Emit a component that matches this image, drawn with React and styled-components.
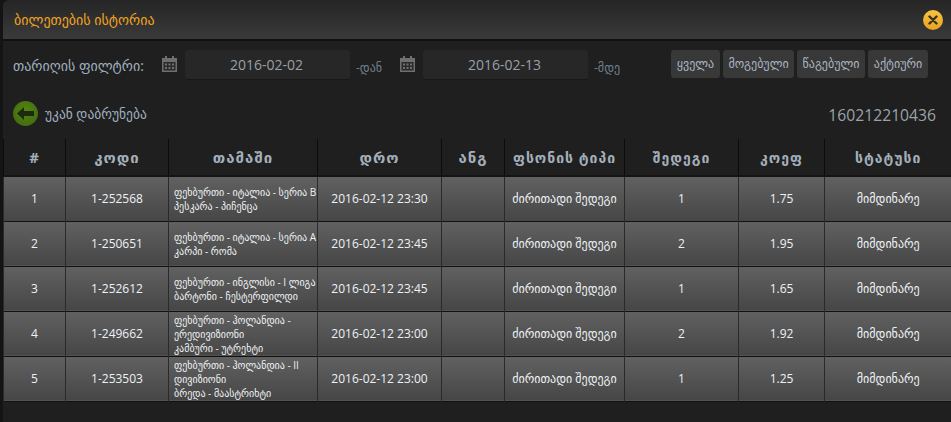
import React from 'react'
import styled, { createGlobalStyle } from 'styled-components'

const Global = createGlobalStyle`
  html, body {
    margin: 0;
    height: 422px;
    overflow: hidden;
    background: #141414;
  }
  * { box-sizing: border-box; }
`
const Modal = styled.div`
  width: 948px;
  height: 422px;
  margin-left: 3px;
  background: #1f1f1f;
  border-top-left-radius: 6px;
  overflow: hidden;
  font-family: "Open Sans", "DejaVu Sans", sans-serif;
`
const Head = styled.div`
  height: 41px;
  padding: 0 8px 0 11px;
  display: flex;
  align-items: center;
  justify-content: space-between;
  background: linear-gradient(#252525, #3a3a3a);
  border-bottom: 2px solid #111;
`
const Title = styled.div`
  font-size: 14px;
  color: #f2a31f;
`
const Close = styled.div`
  width: 20px;
  height: 20px;
  border-radius: 50%;
  background: linear-gradient(#f6c344, #e9a221);
  display: flex;
  align-items: center;
  justify-content: center;
`
const Filters = styled.div`
  height: 39px;
  margin-top: 9px;
  padding-left: 10px;
  display: flex;
  align-items: flex-start;
`
const FilterLabel = styled.div`
  width: 149px;
  padding-top: 6px;
  font-size: 14px;
  color: #9fb0bf;
`
const DateBox = styled.div`
  width: 165px;
  height: 30px;
  margin-left: 8px;
  padding-right: 2px;
  background: #272727;
  border-bottom: 1px solid #171717;
  border-radius: 3px;
  color: #98a0a8;
  font-size: 14px;
  line-height: 30px;
  text-align: center;
`
const Suffix = styled.div`
  width: ${p => p.$width}px;
  padding: 9px 0 0 6px;
  font-size: 12px;
  color: #6f7f8d;
`
const Cal = styled.svg`
  width: 15px;
  height: 16px;
  margin-top: 6px;
`
const Buttons = styled.div`
  margin-left: 39px;
  display: flex;
  gap: 3px;
`
const Btn = styled.div`
  width: ${p => p.$width}px;
  height: 28px;
  background: #383838;
  border-radius: 3px;
  font-size: 12px;
  line-height: 27px;
  text-align: center;
  color: #a9b6c2;
`
const BackRow = styled.div`
  height: 50px;
  padding: 12px 15px 0 10px;
  display: flex;
  align-items: flex-start;
  justify-content: space-between;
`
const Back = styled.div`
  display: flex;
  align-items: center;
  gap: 7px;
  font-size: 13.5px;
  color: #9fb0bf;
`
const BackIcon = styled.div`
  width: 25px;
  height: 25px;
  border-radius: 50%;
  background: radial-gradient(circle at 50% 40%, #55860f, #3f6410);
  display: flex;
  align-items: center;
  justify-content: center;
`
const Ticket = styled.div`
  margin-top: 3px;
  font-size: 15.7px;
  color: #9aa3ab;
`
const Table = styled.table`
  width: 948px;
  table-layout: fixed;
  border-collapse: collapse;
`
const Th = styled.th`
  height: 37px;
  padding: 0;
  background: #1f1f1f;
  border-left: 1px solid #0c0c0c;
  border-bottom: 2px solid #141414;
  font-size: ${p => (p.$small ? 14 : 15)}px;
  letter-spacing: 1px;
  color: #a3afba;
`
const Tr = styled.tr`
  border-bottom: 1px solid #111;
`
const Td = styled.td`
  height: 45px;
  padding: 0;
  background: linear-gradient(#616161, #464646);
  border-left: 1px solid #2a2a2a;
  font-size: 12px;
  text-align: center;
  color: #eef2f5;
`
const GameCell = styled(Td)`
  padding-left: 5px;
  font-size: 10px;
  line-height: 14px;
  text-align: left;
`

const columns = [
  { name: '#', width: 62 },
  { name: 'კოდი', width: 103 },
  { name: 'თამაში', width: 149 },
  { name: 'დრო', width: 124 },
  { name: 'ანგ', width: 63 },
  { name: 'ფსონის ტიპი', width: 120, small: true },
  { name: 'შედეგი', width: 114, small: true },
  { name: 'კოეფ', width: 86, small: true },
  { name: 'სტატუსი', width: 127, small: true },
]

const buttons = [
  { label: 'ყველა', width: 49 },
  { label: 'მოგებული', width: 71 },
  { label: 'წაგებული', width: 68 },
  { label: 'აქტიური', width: 60 },
]

const rows = [
  { code: '1-252568', game: ['ფეხბურთი - იტალია - სერია B', 'პესკარა - პიჩენცა'], time: '2016-02-12 23:30', outcome: 1, odd: '1.75' },
  { code: '1-250651', game: ['ფეხბურთი - იტალია - სერია A', 'კარპი - რომა'], time: '2016-02-12 23:45', outcome: 2, odd: '1.95' },
  { code: '1-252612', game: ['ფეხბურთი - ინგლისი - I ლიგა', 'ბარტონი - ჩესტერფილდი'], time: '2016-02-12 23:45', outcome: 1, odd: '1.65' },
  { code: '1-249662', game: ['ფეხბურთი - ჰოლანდია - ერედივიზიონი', 'კამბური - უტრეხტი'], time: '2016-02-12 23:00', outcome: 2, odd: '1.92' },
  { code: '1-253503', game: ['ფეხბურთი - ჰოლანდია - II დივიზიონი', 'ბრედა - მაასტრიხტი'], time: '2016-02-12 23:00', outcome: 1, odd: '1.25' },
]

const CalendarIcon = () => (
  <Cal viewBox="0 0 15 16">
    <path fill="#6f6f6f" d="M0 2h3V0h2v2h5V0h2v2h3v14H0z" />
    <path fill="#2a2a2a" d="M1.5 6h12v8.5h-12z" />
    <path fill="#6f6f6f" d="M3 7.5h2v2H3zM6.5 7.5h2v2h-2zM10 7.5h2v2h-2zM3 11h2v2H3zM6.5 11h2v2h-2zM10 11h2v2h-2z" />
  </Cal>
)

const App = () => (
  <Modal>
    <Global />
    <Head>
      <Title>ბილეთების ისტორია</Title>
      <Close>
        <svg width="10" height="10" viewBox="0 0 10 10">
          <path d="M1.5 1.5l7 7M8.5 1.5l-7 7" stroke="#3a3220" strokeWidth="2.4" strokeLinecap="round" />
        </svg>
      </Close>
    </Head>
    <Filters>
      <FilterLabel>თარიღის ფილტრი:</FilterLabel>
      <CalendarIcon />
      <DateBox>2016-02-02</DateBox>
      <Suffix $width={50}>-დან</Suffix>
      <CalendarIcon />
      <DateBox>2016-02-13</DateBox>
      <Suffix $width={44}>-მდე</Suffix>
      <Buttons>
        {buttons.map(b => <Btn key={b.label} $width={b.width}>{b.label}</Btn>)}
      </Buttons>
    </Filters>
    <BackRow>
      <Back>
        <BackIcon>
          <svg width="17" height="13" viewBox="0 0 17 13">
            <path fill="#1d2a10" d="M0 6.5L7 0v4h10v5H7v4z" />
          </svg>
        </BackIcon>
        უკან დაბრუნება
      </Back>
      <Ticket>160212210436</Ticket>
    </BackRow>
    <Table>
      <colgroup>
        {columns.map(c => <col key={c.name} width={c.width} />)}
      </colgroup>
      <thead>
        <tr>
          {columns.map(c => <Th key={c.name} $small={c.small}>{c.name}</Th>)}
        </tr>
      </thead>
      <tbody>
        {rows.map((r, i) => (
          <Tr key={r.code}>
            <Td>{i + 1}</Td>
            <Td>{r.code}</Td>
            <GameCell>
              {r.game[0]}<br />{r.game[1]}
            </GameCell>
            <Td>{r.time}</Td>
            <Td />
            <Td>ძირითადი შედეგი</Td>
            <Td>{r.outcome}</Td>
            <Td>{r.odd}</Td>
            <Td>მიმდინარე</Td>
          </Tr>
        ))}
      </tbody>
    </Table>
  </Modal>
)

export default App
